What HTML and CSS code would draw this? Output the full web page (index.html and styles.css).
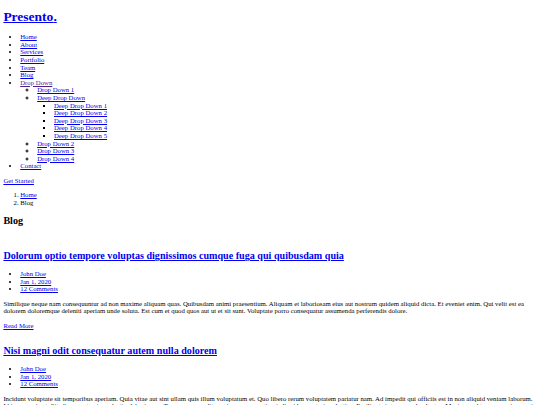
FILE: index.html
```html
<!DOCTYPE html>
<html lang="en">
<head>
<meta charset="utf-8">
<title>Blog - Presento</title>
<link rel="stylesheet" href="styles.css">
</head>
<body>
<header class="header">
  <h1 class="logo"><a href="#">Presento<span>.</span></a></h1>
  <nav class="nav-menu">
    <ul>
      <li><a href="#">Home</a></li>
      <li><a href="#">About</a></li>
      <li><a href="#">Services</a></li>
      <li><a href="#">Portfolio</a></li>
      <li><a href="#">Team</a></li>
      <li><a href="#">Blog</a></li>
      <li><a class="visited" href="#">Drop Down</a>
        <ul>
          <li><a href="#">Drop Down 1</a></li>
          <li><a href="#">Deep Drop Down</a>
            <ul>
              <li><a href="#">Deep Drop Down 1</a></li>
              <li><a href="#">Deep Drop Down 2</a></li>
              <li><a href="#">Deep Drop Down 3</a></li>
              <li><a href="#">Deep Drop Down 4</a></li>
              <li><a href="#">Deep Drop Down 5</a></li>
            </ul>
          </li>
          <li><a href="#">Drop Down 2</a></li>
          <li><a href="#">Drop Down 3</a></li>
          <li><a href="#">Drop Down 4</a></li>
        </ul>
      </li>
      <li><a href="#">Contact</a></li>
    </ul>
  </nav>
  <a class="get-started" href="#">Get Started</a>
</header>
<main>
  <section class="breadcrumbs">
    <ol>
      <li><a href="#">Home</a></li>
      <li>Blog</li>
    </ol>
    <h2>Blog</h2>
  </section>
  <section class="blog">
    <div class="entry-img"></div>
    <article class="entry">
      <h2 class="entry-title"><a href="#">Dolorum optio tempore voluptas dignissimos cumque fuga qui quibusdam quia</a></h2>
      <div class="entry-meta">
        <ul>
          <li><a href="#">John Doe</a></li>
          <li><a href="#"><time>Jan 1, 2020</time></a></li>
          <li><a href="#">12 Comments</a></li>
        </ul>
      </div>
      <div class="entry-content">
        <p>Similique neque nam consequuntur ad non maxime aliquam quas. Quibusdam animi praesentium. Aliquam et laboriosam eius aut nostrum quidem aliquid dicta. Et eveniet enim. Qui velit est ea dolorem doloremque deleniti aperiam unde soluta. Est cum et quod quos aut ut et sit sunt. Voluptate porro consequatur assumenda perferendis dolore.</p>
        <div class="read-more"><a href="#">Read More</a></div>
      </div>
    </article>
    <div class="entry-img"></div>
    <article class="entry">
      <h2 class="entry-title"><a href="#">Nisi magni odit consequatur autem nulla dolorem</a></h2>
      <div class="entry-meta">
        <ul>
          <li><a href="#">John Doe</a></li>
          <li><a href="#"><time>Jan 1, 2020</time></a></li>
          <li><a href="#">12 Comments</a></li>
        </ul>
      </div>
      <div class="entry-content">
        <p>Incidunt voluptate sit temporibus aperiam. Quia vitae aut sint ullam quis illum voluptatum et. Quo libero rerum voluptatem pariatur nam. Ad impedit qui officiis est in non aliquid veniam laborum. Id ipsum qui aut. Sit aliquam et quia molestias laboriosam. Tempora nam odit omnis eum corrupti qui aliquid excepturi molestiae. Facilis et sint quos sed voluptas. Maxime sed tempore enim omnis non alias odio quos distinctio.</p>
        <div class="read-more"><a href="#">Read More</a></div>
      </div>
    </article>
  </section>
</main>
</body>
</html>
```
FILE: styles.css
```css
body {
  margin: 0 3.375px 3.375px;
  font-family: "Liberation Serif", "Times New Roman", serif;
  font-size: 6.75px;
  line-height: 7.594px;
  color: #000;
}
a {
  color: #0000ee;
}
a.visited {
  color: #551a8b;
}
h1 {
  font-size: 13.5px;
  line-height: 15.2px;
  margin: 9.05px 0;
}
h2 {
  font-size: 10.125px;
  line-height: 11.4px;
  margin: 8.4px 0;
}
ul, ol {
  margin: 6.75px 0;
  padding-left: 16.875px;
}
li ul {
  margin: 0;
}
p {
  margin: 6.75px 0;
}
.entry-img {
  height: 7.594px;
}
```
